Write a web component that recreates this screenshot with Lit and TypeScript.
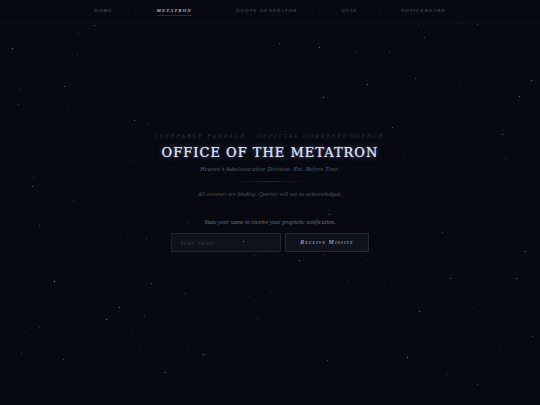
import { LitElement, html, svg, css } from "lit";
import { customElement, state } from "lit/decorators.js";

type Star = [x: number, y: number, opacity: number];

// Star positions on a 540 x 405 sky, scaled to the window as percentages.
const SKY_WIDTH = 540;
const SKY_HEIGHT = 405;
const STARS: Star[] = [
  [94, 25, 0.45], [78, 33, 0.25], [12, 48, 0.65], [77, 54, 0.3], [78, 74, 0.2],
  [64, 86, 0.45], [19, 89, 0.25], [18, 104, 0.3], [107, 91, 0.15], [68, 109, 0.18],
  [103, 104, 0.08], [134, 120, 0.5], [147, 124, 0.4], [9, 138, 0.15], [130, 161, 0.25],
  [60, 170, 0.15], [33, 177, 0.35], [46, 181, 0.22], [32, 186, 0.45], [169, 57, 0.12],
  [116, 28, 0.06], [162, 196, 0.1], [174, 195, 0.1], [73, 200, 0.25], [39, 225, 0.35],
  [122, 220, 0.18], [155, 209, 0.1], [127, 237, 0.2], [146, 238, 0.35], [104, 267, 0.1],
  [54, 281, 0.8], [15, 284, 0.14], [22, 292, 0.14], [151, 283, 0.45], [119, 307, 0.5],
  [106, 319, 0.5], [144, 315, 0.3], [172, 310, 0.1], [39, 327, 0.22], [25, 331, 0.22],
  [132, 334, 0.2], [140, 349, 0.22], [21, 353, 0.35], [63, 359, 0.35], [70, 350, 0.1],
  [37, 358, 0.1], [85, 356, 0.08], [165, 372, 0.5], [69, 386, 0.25], [299, 260, 0.6],
  [287, 276, 0.15], [348, 280, 0.2], [185, 293, 0.4], [270, 292, 0.25], [249, 296, 0.2],
  [257, 318, 0.3], [221, 330, 0.14], [187, 347, 0.2], [203, 354, 0.5], [226, 365, 0.18],
  [260, 350, 0.1], [327, 360, 0.35], [340, 378, 0.08], [495, 213, 0.1], [466, 222, 0.12],
  [446, 227, 0.1], [442, 232, 0.35], [525, 251, 0.55], [366, 260, 0.2], [450, 278, 0.5],
  [516, 278, 0.5], [384, 282, 0.2], [473, 308, 0.2], [419, 311, 0.5], [389, 324, 0.15],
  [532, 336, 0.4], [418, 345, 0.2], [500, 346, 0.25], [407, 357, 0.6], [446, 374, 0.4],
  [477, 384, 0.35], [418, 24, 0.25], [462, 23, 0.15], [477, 24, 0.35], [424, 37, 0.35],
  [389, 52, 0.35], [426, 58, 0.25], [415, 78, 0.4], [367, 84, 0.5], [460, 81, 0.18],
  [531, 80, 0.55], [519, 96, 0.5], [392, 127, 0.4], [502, 134, 0.5], [403, 154, 0.25],
  [505, 158, 0.3], [461, 167, 0.2], [411, 148, 0.08], [473, 93, 0.08], [513, 110, 0.06],
  [534, 192, 0.08], [204, 30, 0.1], [279, 43, 0.4], [319, 47, 0.5], [355, 51, 0.4],
  [323, 97, 0.65], [230, 78, 0.1], [185, 87, 0.1], [293, 118, 0.18], [284, 131, 0.15],
  [173, 145, 0.2], [296, 167, 0.1], [349, 192, 0.15], [188, 222, 0.3], [329, 214, 0.5],
  [323, 213, 0.1], [243, 241, 0.6], [293, 242, 0.25], [254, 255, 0.3], [264, 251, 0.15],
  [323, 254, 0.4], [366, 246, 0.2], [365, 255, 0.15],
];

const LINKS = ["Home", "Metatron", "Quote Generator", "Quiz", "Noticeboard"];

@customElement("star-field")
export class StarField extends LitElement {
  static styles = css`
    :host {
      display: block;
      pointer-events: none;
    }
    .sky {
      display: block;
      width: 100%;
      height: 100%;
    }
    .star {
      fill: #aeb4c0;
    }
  `;

  render() {
    return html`<svg class="sky" aria-hidden="true">
      ${STARS.map(
        ([x, y, opacity]) => svg`<rect
          class="star"
          x="${(x / SKY_WIDTH) * 100}%"
          y="${(y / SKY_HEIGHT) * 100}%"
          width="1"
          height="1"
          fill-opacity=${opacity}
        ></rect>`
      )}
    </svg>`;
  }
}

@customElement("site-nav")
export class SiteNav extends LitElement {
  static styles = css`
    :host {
      display: block;
      border-bottom: 1px solid #0e0f19;
    }
    .bar {
      display: flex;
      justify-content: center;
      align-items: center;
      gap: 21px;
      height: 22px;
      font: italic 5px/7px "Liberation Serif", serif;
      letter-spacing: 1px;
      text-transform: uppercase;
    }
    .link {
      color: #5c5e6a;
      text-decoration: none;
      border-bottom: 1px solid transparent;
      padding-bottom: 1px;
    }
    .link.current {
      color: #b4bdd0;
      font-weight: bold;
      border-bottom-color: #252b3a;
    }
    .divider {
      color: #353743;
    }
  `;

  render() {
    return html`<nav class="bar" aria-label="Main">
      ${LINKS.map(
        (label, i) => html`${i > 0
            ? html`<span class="divider" aria-hidden="true">⁝</span>`
            : ""}<a
            class="link ${label === "Metatron" ? "current" : ""}"
            href="#${label.toLowerCase().replace(" ", "-")}"
            >${label}</a
          >`
      )}
    </nav>`;
  }
}

@customElement("app-root")
export class AppRoot extends LitElement {
  @state() private name = "";

  static styles = css`
    :host {
      display: block;
      position: relative;
      min-height: 100vh;
      background: #070811;
      color: #5c5e6a;
      font-family: "Liberation Serif", serif;
    }
    .stars {
      position: absolute;
      inset: 0;
    }
    .office {
      display: flex;
      flex-direction: column;
      align-items: center;
      padding: 109px 16px 24px;
      text-align: center;
      font-style: italic;
    }
    .eyebrow {
      margin: 0;
      font-size: 6px;
      line-height: 8px;
      letter-spacing: 2px;
      text-transform: uppercase;
      color: #30323d;
    }
    .title {
      margin: 4px 0 3px;
      font: normal 13px/18px "DejaVu Serif", serif;
      letter-spacing: 1px;
      text-transform: uppercase;
      color: #d4dcee;
      text-shadow: 0 0 1px #d4dcee, 0 0 6px rgba(150, 165, 215, 0.5);
    }
    .subtitle {
      margin: 0;
      font-size: 6px;
      line-height: 9px;
      letter-spacing: 0.05em;
      color: #5f616d;
    }
    .rule {
      width: 80px;
      height: 1px;
      margin: 7px 0 8px;
      border: 0;
      background: linear-gradient(90deg, transparent, #20232e, transparent);
    }
    .note {
      margin: 0;
      font-size: 6px;
      line-height: 9px;
      color: #50525e;
    }
    .form {
      display: flex;
      flex-wrap: wrap;
      justify-content: center;
      gap: 6px 4px;
      margin-top: 19px;
    }
    .prompt {
      flex-basis: 100%;
      font-size: 6px;
      line-height: 9px;
      color: #74757f;
    }
    .field,
    .submit {
      box-sizing: border-box;
      height: 19px;
      margin: 0;
      border: 1px solid #22232d;
      border-radius: 0;
      background: #101119;
      font: italic 6px/9px "Liberation Serif", serif;
      letter-spacing: 1px;
    }
    .field {
      width: 110px;
      padding: 0 8px;
      color: #b4bdd0;
    }
    .field::placeholder {
      color: #3b3d48;
      opacity: 1;
    }
    .submit {
      width: 84px;
      padding: 0;
      border-color: #262934;
      background: #11131c;
      color: #94a0b5;
      font-weight: bold;
      font-variant-caps: small-caps;
    }
  `;

  private onInput(event: Event) {
    this.name = (event.target as HTMLInputElement).value;
  }

  private onSubmit(event: Event) {
    event.preventDefault();
  }

  render() {
    return html`
      <site-nav></site-nav>
      <main class="office">
        <p class="eyebrow">Ineffable Fanpage · Official Correspondence</p>
        <h1 class="title">Office of the Metatron</h1>
        <p class="subtitle">Heaven’s Administrative Division. Est. Before Time.</p>
        <hr class="rule" />
        <p class="note">All missives are binding. Queries will not be acknowledged.</p>
        <form class="form" @submit=${this.onSubmit}>
          <label class="prompt" for="name">State your name to receive your prophetic notification.</label>
          <input
            class="field"
            id="name"
            type="text"
            placeholder="Your name"
            .value=${this.name}
            @input=${this.onInput}
          />
          <button class="submit" type="submit">Receive Missive</button>
        </form>
      </main>
      <star-field class="stars"></star-field>
    `;
  }
}
